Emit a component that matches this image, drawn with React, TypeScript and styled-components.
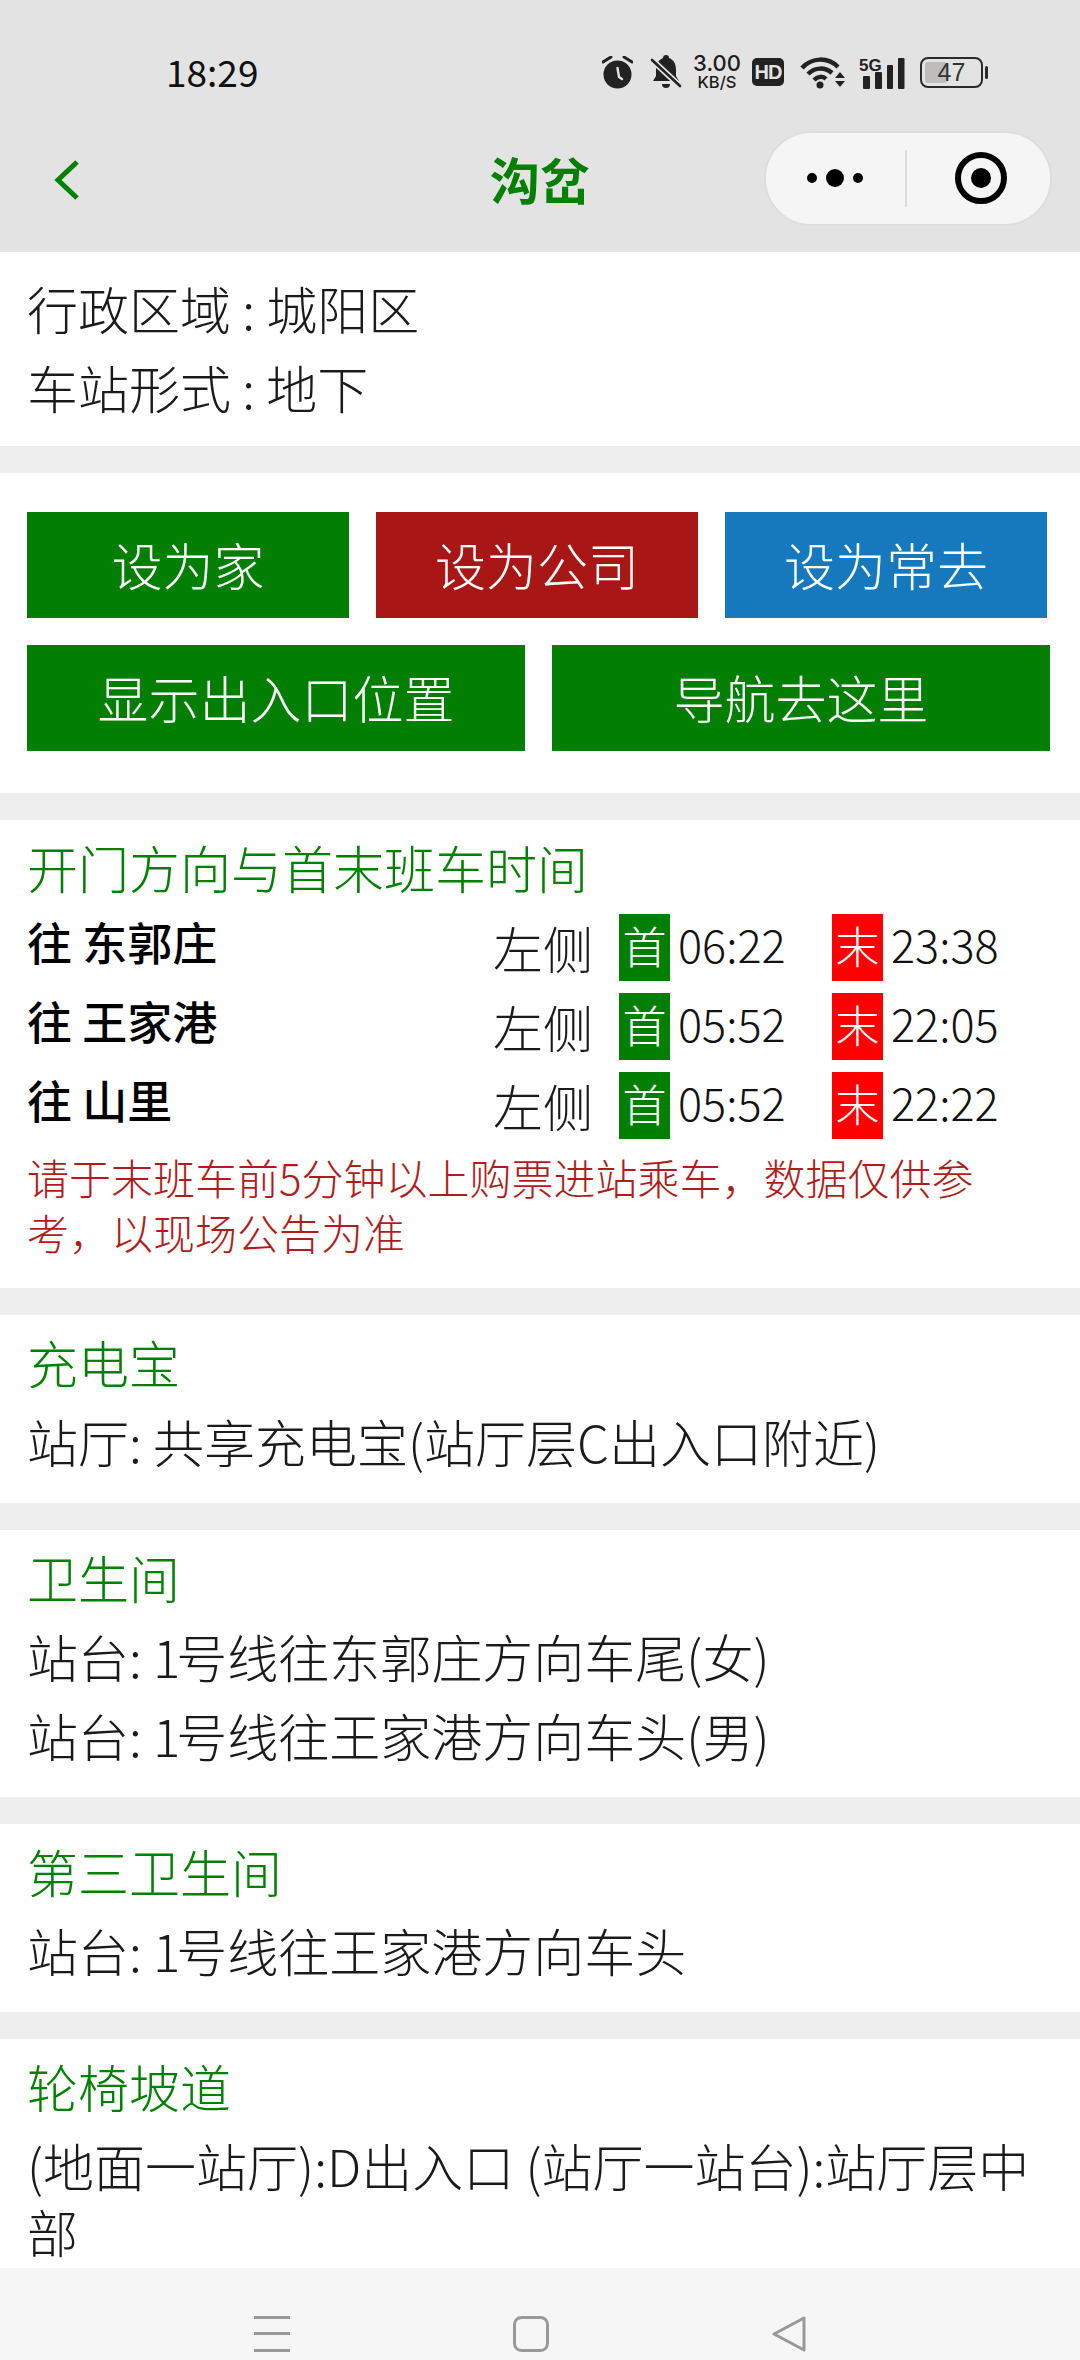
import React from 'react';
import styled, { createGlobalStyle } from 'styled-components';

const FONT = `"Noto Sans CJK SC", "Noto Sans", sans-serif`;
const GREEN = '#008000';

const GlobalStyle = createGlobalStyle`
  html, body { margin: 0; padding: 0; background: #eeeeee; }
  * { box-sizing: border-box; }
`;

const Page = styled.div`
  width: 1080px;
  height: 2360px;
  display: flex;
  flex-direction: column;
  overflow: hidden;
  background: #eeeeee;
  font-family: ${FONT};
  font-weight: 300;
  color: #111;
`;

const Header = styled.header`
  background: #e3e3e3;
  flex-shrink: 0;
`;

const StatusBar = styled.div`
  height: 108px;
  padding: 36px 93px 0 166px;
  display: flex;
  align-items: center;
  justify-content: space-between;
`;

const Time = styled.span`
  font-size: 37px;
  font-weight: 400;
  color: #111;
  margin-top: -3px;
`;

const StatusIcons = styled.div`
  display: flex;
  align-items: center;
  height: 72px;
`;

const Speed = styled.div`
  width: 52px;
  margin: 0 9px;
  display: flex;
  flex-direction: column;
  align-items: center;
  font-family: Inter, sans-serif;
  font-weight: 500;
  color: #1c1c1c;
`;

const SpeedValue = styled.span`
  font-size: 22px;
  line-height: 21px;
`;

const SpeedUnit = styled.span`
  font-size: 16.500px;
  line-height: 17px;
`;

const HdBadge = styled.span`
  width: 32px;
  height: 28px;
  flex-shrink: 0;
  border-radius: 5px;
  background: #222;
  color: #e3e3e3;
  font-family: "Liberation Sans", sans-serif;
  font-size: 20px;
  font-weight: 700;
  line-height: 28px;
  letter-spacing: -1px;
  text-align: center;
`;

const Battery = styled.div`
  position: relative;
  width: 63px;
  height: 31px;
  margin: 0 4px 0 15px;
  border: 2px solid #2a2a2a;
  border-radius: 8px;
  display: flex;
  align-items: center;
  justify-content: center;
  font-family: "Liberation Sans", sans-serif;
  font-size: 25px;
  line-height: 27px;
  color: #333;

  &::before {
    content: '';
    position: absolute;
    left: 3px;
    top: 3px;
    bottom: 3px;
    width: 22px;
    border-radius: 3px;
    background: #bdbdbd;
  }

  &::after {
    content: '';
    position: absolute;
    right: -7px;
    top: 7px;
    width: 3px;
    height: 13px;
    border-radius: 2px;
    background: #2a2a2a;
  }
`;

const BatteryLevel = styled.span`
  position: relative;
`;

const NavBar = styled.nav`
  height: 144px;
  display: grid;
  grid-template-columns: 1fr auto 1fr;
  align-items: center;
`;

const Back = styled.div`
  padding-left: 54px;
  display: flex;
`;

const NavTitle = styled.h1`
  margin: -4px 0 0;
  font-size: 50px;
  font-weight: 700;
  color: ${GREEN};
`;

const Capsule = styled.div`
  justify-self: end;
  margin: -4px 28px 0 0;
  width: 288px;
  height: 95px;
  border-radius: 48px;
  border: 2px solid #dedede;
  background: #f5f5f5;
  display: flex;
  align-items: center;
`;

const CapsuleCell = styled.div<{ $shift?: number }>`
  flex: 1;
  padding-left: ${(p) => p.$shift ?? 0}px;
  display: flex;
  justify-content: center;
  align-items: center;
`;

const CapsuleDivider = styled.div`
  width: 2px;
  height: 57px;
  background: #dcdcdc;
`;

const Content = styled.main`
  flex: 1;
  min-height: 0;
  overflow: hidden;
  display: flex;
  flex-direction: column;
  gap: 27px;
`;

const Section = styled.section<{ $top?: number; $bottom?: number }>`
  flex-shrink: 0;
  background: #fff;
  padding: ${(p) => p.$top ?? 14}px 27px ${(p) => p.$bottom ?? 29}px;
`;

const Line = styled.div`
  margin-top: 13px;
  font-size: 51px;
  line-height: 66px;
  color: #1a1a1a;
  &:first-child { margin-top: 0; }
`;

const Digit = styled.span`
  letter-spacing: -4px;
`;

const SectionTitle = styled.h2`
  margin: 0;
  font-size: 51px;
  line-height: 66px;
  font-weight: 300;
  color: ${GREEN};
`;

const ButtonRow = styled.div<{ $columns: number }>`
  display: grid;
  grid-template-columns: repeat(${(p) => p.$columns}, 1fr);
  gap: 27px;
  margin: 0 ${(p) => (p.$columns === 3 ? 6 : 3)}px 27px 0;
  &:last-child { margin-bottom: 0; }
`;

const ActionButton = styled.button<{ $color: string }>`
  height: 106px;
  border: none;
  padding: 0 0 3px;
  background: ${(p) => p.$color};
  color: #fff;
  font-family: ${FONT};
  font-size: 51px;
  font-weight: 300;
`;

const Timetable = styled.div`
  margin-top: 14px;
  display: flex;
  flex-direction: column;
  gap: 12px;
`;

const TimeRow = styled.div`
  display: grid;
  grid-template-columns: 466px 126px 51px 162px 51px auto;
  height: 67px;
  align-items: center;
`;

const Direction = styled.span`
  font-size: 45px;
  font-weight: 500;
  color: #000;
  margin-top: -12px;
`;

const Side = styled.span`
  font-size: 50px;
  line-height: 67px;
  color: #1a1a1a;
`;

const Badge = styled.span<{ $color: string }>`
  height: 67px;
  background: ${(p) => p.$color};
  color: #fff;
  font-size: 44px;
  line-height: 62px;
  text-align: center;
`;

const TrainTime = styled.span`
  padding-left: 8px;
  font-size: 45px;
  line-height: 60px;
  align-self: start;
  color: #111;
`;

const Notice = styled.p`
  margin: 10px 0 0;
  font-size: 42px;
  line-height: 55px;
  color: #b01c1c;
`;

const BottomNav = styled.footer`
  height: 92px;
  flex-shrink: 0;
  background: #f6f6f6;
  padding: 48px 0 0 254px;
  display: flex;
  align-items: flex-start;
  gap: 223px;
`;

const Svg = styled.svg<{ $left?: number }>`
  display: block;
  flex-shrink: 0;
  margin-left: ${(p) => p.$left ?? 0}px;
`;

const AlarmIcon = () => (
  <Svg width="31" height="33" viewBox="0 0 31 33" fill="none">
    <circle cx="15.500" cy="18.500" r="14" fill="#222" />
    <path d="M15.500 12l1.500 9 3 2" stroke="#e3e3e3" strokeWidth="2.400" strokeLinecap="round" strokeLinejoin="round" />
    <path d="M1 6l8-5M30 6l-8-5" stroke="#222" strokeWidth="3" strokeLinecap="round" />
  </Svg>
);

const MuteIcon = () => (
  <Svg $left={17} width="32" height="34" viewBox="0 0 32 34" fill="none">
    <path d="M13 3a3 3 0 0 1 6 0c5 2 7 6 7 12v6l3 5H3l3-5v-6C6 10 8 5 13 3z" fill="#222" />
    <path d="M12 29h8a4 4 0 0 1-8 0z" fill="#222" />
    <path d="M2 5l28 26" stroke="#e3e3e3" strokeWidth="6" />
    <path d="M2 5l28 26" stroke="#222" strokeWidth="2.600" strokeLinecap="round" />
  </Svg>
);

const WifiIcon = () => (
  <Svg $left={16} width="46" height="33" viewBox="0 0 46 33" fill="none">
    <path d="M2 12C12 1 28 1 38 11" stroke="#222" strokeWidth="4.500" />
    <path d="M8 18c7-7 17-7 24-1" stroke="#222" strokeWidth="4.500" />
    <path d="M14 24c4-4 9-4 12-1" stroke="#222" strokeWidth="4.500" />
    <circle cx="20" cy="29" r="3.500" fill="#222" />
    <path d="M35 22l5-6 5 6zM35 25l5 6 5-6z" fill="#222" />
  </Svg>
);

const SignalIcon = () => (
  <Svg $left={13} width="46" height="33" viewBox="0 0 46 33">
    <text x="0" y="15" fontSize="17" fontWeight="700" fontFamily="Liberation Sans, sans-serif" fill="#222">5G</text>
    <rect x="4" y="20" width="7" height="13" rx="1" fill="#222" />
    <rect x="16" y="16" width="7" height="17" rx="1" fill="#222" />
    <rect x="28" y="9" width="6" height="24" rx="1" fill="#222" />
    <rect x="39" y="2" width="6.500" height="31" rx="1" fill="#222" />
  </Svg>
);

const BackIcon = () => (
  <Svg width="26" height="40" viewBox="0 0 26 40" fill="none">
    <path d="M23 2L4 20l19 18" stroke={GREEN} strokeWidth="5" />
  </Svg>
);

const MoreIcon = () => (
  <Svg width="58" height="20" viewBox="0 0 58 20">
    <circle cx="5" cy="10" r="5" fill="#000" />
    <circle cx="28" cy="10" r="9" fill="#000" />
    <circle cx="51" cy="10" r="5" fill="#000" />
  </Svg>
);

const TargetIcon = () => (
  <Svg width="54" height="54" viewBox="0 0 54 54" fill="none">
    <circle cx="27" cy="27" r="23" stroke="#000" strokeWidth="6" />
    <circle cx="27" cy="27" r="10" fill="#000" />
  </Svg>
);

const MenuKey = () => (
  <Svg width="36" height="36" viewBox="0 0 36 36">
    <rect y="0" width="36" height="3" fill="#999" />
    <rect y="16" width="36" height="3" fill="#999" />
    <rect y="33" width="36" height="3" fill="#999" />
  </Svg>
);

const HomeKey = () => (
  <Svg width="36" height="36" viewBox="0 0 36 36" fill="none">
    <rect x="1.500" y="1.500" width="33" height="33" rx="7" stroke="#999" strokeWidth="3" />
  </Svg>
);

const BackKey = () => (
  <Svg width="34" height="36" viewBox="0 0 34 36" fill="none">
    <path d="M32 2v32L2 18z" stroke="#999" strokeWidth="3" strokeLinejoin="round" />
  </Svg>
);

const timetable = [
  { to: '往 东郭庄', first: '06:22', last: '23:38' },
  { to: '往 王家港', first: '05:52', last: '22:05' },
  { to: '往 山里', first: '05:52', last: '22:22' },
];

const App: React.FC = () => (
  <Page>
    <GlobalStyle />
    <Header>
      <StatusBar>
        <Time>18:29</Time>
        <StatusIcons>
          <AlarmIcon />
          <MuteIcon />
          <Speed>
            <SpeedValue>3.00</SpeedValue>
            <SpeedUnit>KB/S</SpeedUnit>
          </Speed>
          <HdBadge>HD</HdBadge>
          <WifiIcon />
          <SignalIcon />
          <Battery><BatteryLevel>47</BatteryLevel></Battery>
        </StatusIcons>
      </StatusBar>
      <NavBar>
        <Back><BackIcon /></Back>
        <NavTitle>沟岔</NavTitle>
        <Capsule>
          <CapsuleCell><MoreIcon /></CapsuleCell>
          <CapsuleDivider />
          <CapsuleCell $shift={4}><TargetIcon /></CapsuleCell>
        </Capsule>
      </NavBar>
    </Header>

    <Content>
      <Section $top={23} $bottom={26}>
        <Line>行政区域 : 城阳区</Line>
        <Line>车站形式 : 地下</Line>
      </Section>

      <Section $top={39} $bottom={42}>
        <ButtonRow $columns={3}>
          <ActionButton $color="#027f02">设为家</ActionButton>
          <ActionButton $color="#a81616">设为公司</ActionButton>
          <ActionButton $color="#1779bd">设为常去</ActionButton>
        </ButtonRow>
        <ButtonRow $columns={2}>
          <ActionButton $color="#027f02">显示出入口位置</ActionButton>
          <ActionButton $color="#027f02">导航去这里</ActionButton>
        </ButtonRow>
      </Section>

      <Section>
        <SectionTitle>开门方向与首末班车时间</SectionTitle>
        <Timetable>
          {timetable.map((row) => (
            <TimeRow key={row.to}>
              <Direction>{row.to}</Direction>
              <Side>左侧</Side>
              <Badge $color="#027f02">首</Badge>
              <TrainTime>{row.first}</TrainTime>
              <Badge $color="#fe0000">末</Badge>
              <TrainTime>{row.last}</TrainTime>
            </TimeRow>
          ))}
        </Timetable>
        <Notice>请于末班车前5分钟以上购票进站乘车，数据仅供参考，以现场公告为准</Notice>
      </Section>

      <Section>
        <SectionTitle>充电宝</SectionTitle>
        <Line>站厅: 共享充电宝(站厅层C出入口附近)</Line>
      </Section>

      <Section>
        <SectionTitle>卫生间</SectionTitle>
        <Line>站台: <Digit>1</Digit>号线往东郭庄方向车尾(女)</Line>
        <Line>站台: <Digit>1</Digit>号线往王家港方向车头(男)</Line>
      </Section>

      <Section>
        <SectionTitle>第三卫生间</SectionTitle>
        <Line>站台: <Digit>1</Digit>号线往王家港方向车头</Line>
      </Section>

      <Section>
        <SectionTitle>轮椅坡道</SectionTitle>
        <Line>(地面一站厅):D出入口 (站厅一站台):站厅层中部</Line>
      </Section>
    </Content>

    <BottomNav>
      <MenuKey />
      <HomeKey />
      <BackKey />
    </BottomNav>
  </Page>
);

export default App;
